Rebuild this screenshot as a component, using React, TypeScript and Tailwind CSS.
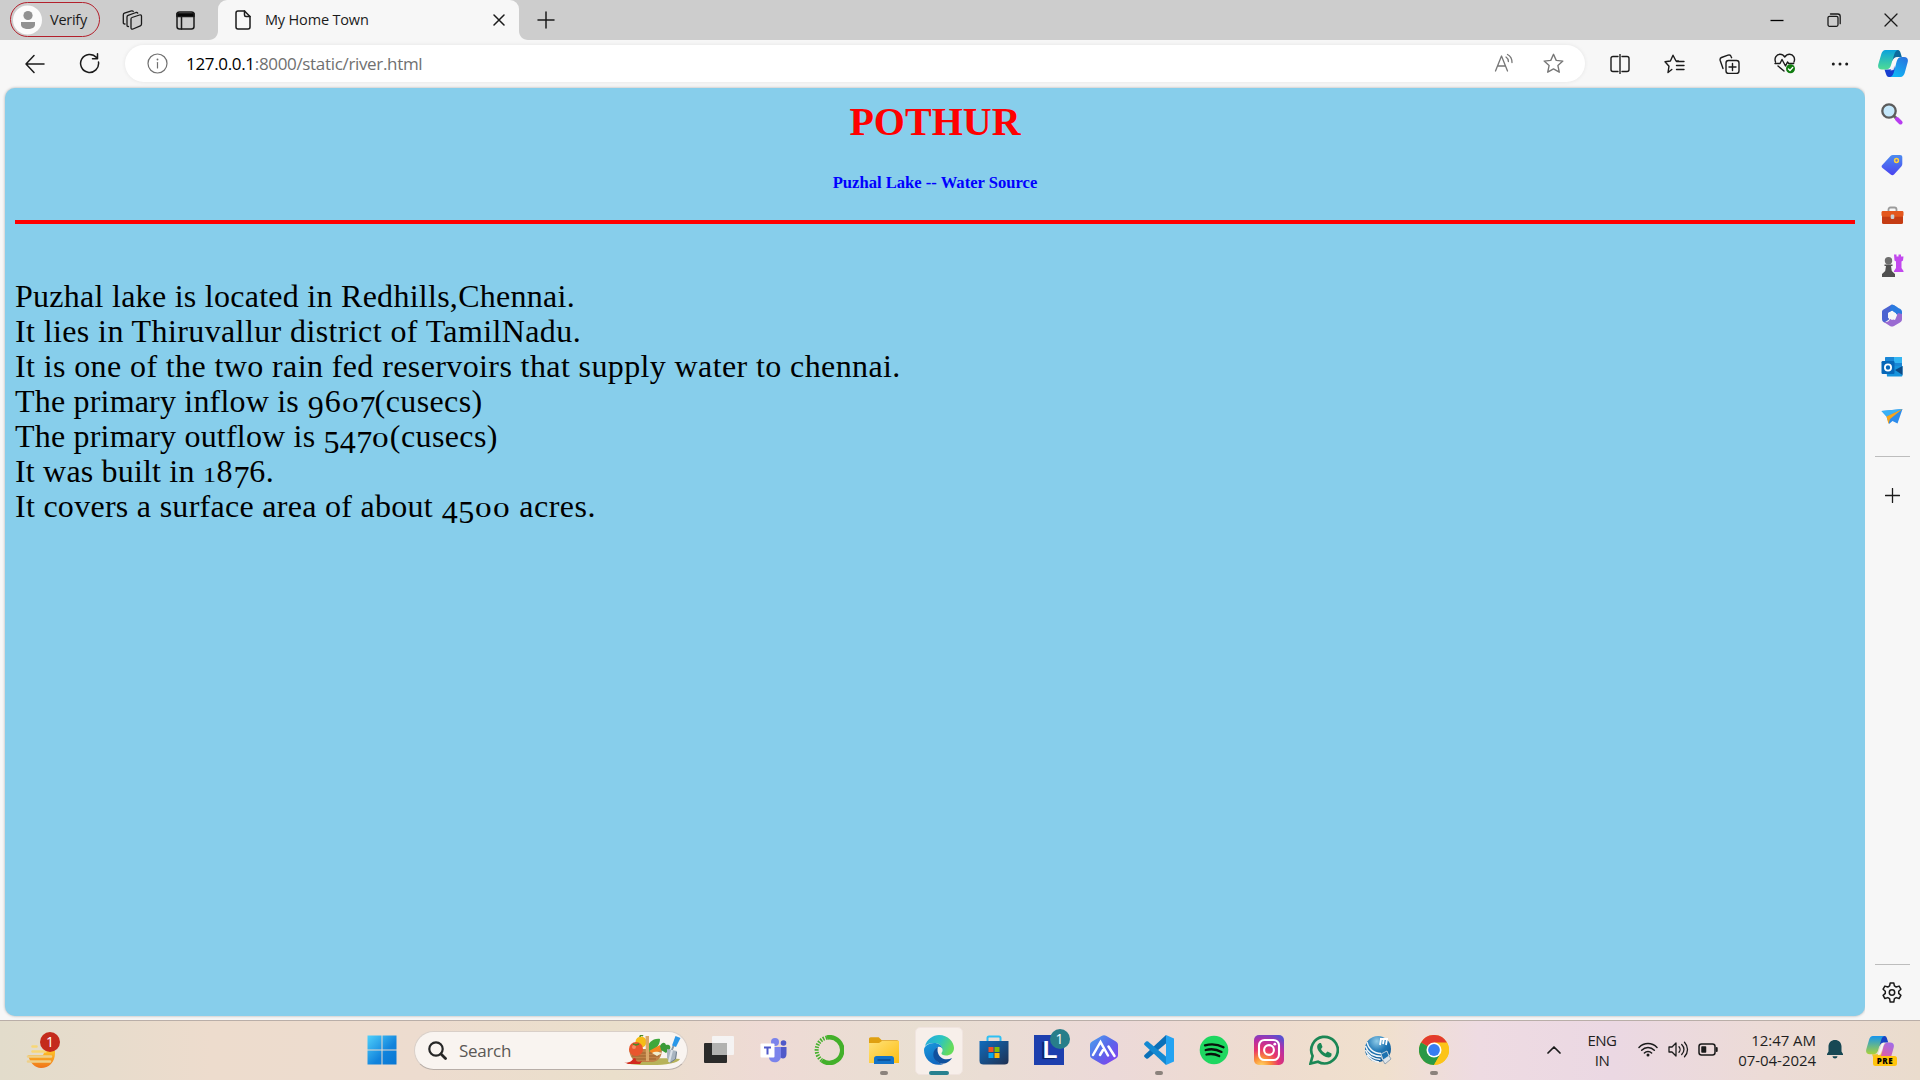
import type { ReactNode } from "react";

const UI = "font-['Open_Sans','Noto_Sans',sans-serif]";

function Ico({ w = 20, h, box, sw = 1.3, color = "#1b1b1b", children }: { w?: number; h?: number; box?: string; sw?: number; color?: string; children: ReactNode }) {
  return (
    <svg className="block shrink-0" width={w} height={h ?? w} viewBox={box ?? `0 0 ${w} ${h ?? w}`} fill="none" stroke={color} strokeWidth={sw} strokeLinecap="round" strokeLinejoin="round">
      {children}
    </svg>
  );
}

const STAR = "M10 1.2 12.6 7l6.3.7-4.7 4.3 1.3 6.3L10 15.2 4.500 18.3 5.800 12 1.100 7.700 7.400 7Z";

function CopilotMark({ size, id, colors }: { size: number; id: string; colors: string[] }) {
  return (
    <svg className="block shrink-0" width={size} height={(size * 27) / 30} viewBox="0 0 30 27">
      <defs>
        <linearGradient id={`${id}a`} x1="0" y1="0" x2="0" y2="1">
          <stop offset="0" stopColor={colors[0]} />
          <stop offset="1" stopColor={colors[1]} />
        </linearGradient>
        <linearGradient id={`${id}b`} x1="1" y1="0" x2="0.4" y2="1">
          <stop offset="0" stopColor={colors[2]} />
          <stop offset="1" stopColor={colors[3]} />
        </linearGradient>
      </defs>
      <path d="M12 0h8c1.400 0 2.100 1.400 2.600 3l1.200 4h-4c-3 0-4.500 1.500-5.300 4Z" fill={colors[4]} />
      <path d="M18 27h-7c-2 0-2.500-1.600-3-3l-1.500-4.500H11c3 0 4.500-1.500 5.300-4Z" fill={colors[5]} />
      <path d="M7.500 0H20c-2 .5-3 2-3.700 4.200l-3.500 11.500c-.9 2.600-2.300 3.800-5 3.800H4c-3.500 0-4.500-2.500-3.600-5.500L3.300 4C4 1.700 5.300 0 7.500 0Z" fill={`url(#${id}a)`} />
      <path d="M22.500 27H12c2-.5 3-2 3.700-4.200l3-11.500c.9-2.800 2.300-4.300 5-4.300H26c3.500 0 4.500 2.500 3.600 5.500L26.700 23c-.7 2.300-2 4-4.200 4Z" fill={`url(#${id}b)`} />
      <path d="m17 8 2.500-1-4 13-3 .5Z" fill="#f7f7f7" fillOpacity=".9" />
    </svg>
  );
}

function TabStrip() {
  return (
    <div className="flex h-10 shrink-0 bg-[#cdcdcd]">
      <div className="flex w-[218px] items-center pl-[10px]">
        <div className="mb-px flex h-[35px] w-[90px] items-center rounded-full border-[1.5px] border-[#b3202c] pl-[1px]">
          <svg width="30" height="30" viewBox="0 0 30 30">
            <circle cx="15.500" cy="15" r="14.500" fill="#fbfbfb" />
            <circle cx="16" cy="10.500" r="4.600" fill="#919191" />
            <path d="M9 17h14v2.500c0 3-3 4.500-7 4.500s-7-1.500-7-4.500Z" fill="#919191" />
          </svg>
          <span className="ml-[8px] text-[14.500px] tracking-[-0.25px] text-[#1b1b1b]">Verify</span>
        </div>
        <div className="ml-[22px]">
          <Ico w={21} h={21}>
            <path d="M10 7.500 17.500 5c1.300-.4 2 .2 2 1.300V14c0 .9-.3 1.500-1.200 1.900L11 19c-1.300.5-2-.2-2-1.200V9c0-.8.3-1.300 1-1.500Z" />
            <path d="M6.500 16.500c-1 .2-1.500-.4-1.500-1.300V7c0-.9.300-1.400 1.100-1.700L14 2.500c.8-.2 1.400 0 1.700.6M3 14c-1 .1-1.700-.4-1.700-1.300V4.900c0-.8.3-1.400 1.100-1.700L9.500.900c.8-.2 1.400 0 1.700.5" />
          </Ico>
        </div>
        <div className="ml-[33px]">
          <Ico w={19} h={19} sw={1.500}>
            <rect x="1" y="1" width="17" height="17" rx="2.500" />
            <path d="M1 2.500h17v3H1Z" fill="#000" />
            <path d="M5.500 5.500V18" />
          </Ico>
        </div>
      </div>
      <div className="relative flex w-[301px] items-center rounded-t-[9px] bg-[#f7f7f7] pl-[17px]">
        <svg className="absolute bottom-0 -left-[9px]" width="9" height="9"><path d="M9 0v9H0C5 9 9 5 9 0Z" fill="#f7f7f7" /></svg>
        <svg className="absolute -right-[9px] bottom-0" width="9" height="9"><path d="M0 0v9h9C4 9 0 5 0 0Z" fill="#f7f7f7" /></svg>
        <Ico w={16} h={20} sw={1.500}>
          <path d="M3 1h6.500L15 6.500V17c0 1.300-.7 2-2 2H3c-1.300 0-2-.7-2-2V3c0-1.300.7-2 2-2Z" />
          <path d="M9.500 1v4c0 1 .5 1.500 1.500 1.500h4" />
        </Ico>
        <span className="ml-[14px] text-[14.500px] tracking-[-0.17px] text-[#1b1b1b]">My Home Town</span>
        <div className="mr-[14px] ml-auto"><Ico w={12} sw={1.500}><path d="m1 1 10 10M11 1 1 11" /></Ico></div>
      </div>
      <div className="flex w-[53px] items-center justify-center"><Ico w={18} sw={1.500}><path d="M9 1v16M1 9h16" /></Ico></div>
      <div className="mr-[1px] ml-auto flex h-[39px]">
        <div className="flex w-[57px] items-center justify-center"><Ico w={14}><path d="M.5 7.500h13" strokeLinecap="butt" stroke="#000" /></Ico></div>
        <div className="flex w-[57px] items-center justify-center">
          <Ico w={14}><rect x="1" y="3.300" width="10" height="10" rx="1.500" /><path d="M3.500 1h7.300c1.600 0 2.400.8 2.400 2.400v7.300" /></Ico>
        </div>
        <div className="flex w-[57px] items-center justify-center"><Ico w={14}><path d="m1 1 12 12M13 1 1 13" /></Ico></div>
      </div>
    </div>
  );
}

function Cell({ children }: { children: ReactNode }) {
  return <div className="flex w-[55px] justify-center">{children}</div>;
}

function Toolbar() {
  return (
    <div className="flex h-12 shrink-0 items-center bg-[#f7f7f7] pb-[1px]">
      <div className="flex w-[125px] items-center pl-[25px]">
        <Ico w={20} sw={1.500}><path d="M19 10H1M9 1.500 1 10l8 8.500" /></Ico>
        <div className="ml-[34px]">
          <Ico w={21} sw={1.500}><path d="M17.500 4.600A9 9 0 1 0 19.500 9M18.500.8v5h-5" /></Ico>
        </div>
      </div>
      <div className="flex h-[37px] w-[1460px] items-center rounded-full bg-white pl-[22px] shadow-[0_0_4px_rgba(0,0,0,0.08)]">
        <Ico w={21} color="#707070" sw={1.200}>
          <circle cx="10.500" cy="10.500" r="9.500" /><path d="M10.500 9.500v5.500" /><path d="M10.500 6.300v.3" strokeWidth="1.800" />
        </Ico>
        <span className="ml-[18px] text-[17px] tracking-[-0.33px] whitespace-nowrap text-[#707070]">
          <span className="text-black">127.0.0.1</span>:8000/static/river.html
        </span>
        <div className="mr-[21px] ml-auto flex items-center gap-[28px]">
          <Ico w={21} color="#767676"><path d="m1.500 18 6-15 6 15M3.500 13h8M12 4c1.600 1 2.400 2.700 2.400 4.600M13.500 1.500c3 1.500 4.500 4.500 4.500 8" /></Ico>
          <Ico w={21} box="0 0 20 20" color="#767676"><path d={STAR} /></Ico>
        </div>
      </div>
      <div className="flex items-center pl-[7px]">
        <Cell><Ico w={20} sw={1.400}><path d="M8 2.500H3c-1.300 0-2 .7-2 2v11c0 1.300.7 2 2 2h5M12 2.500h5c1.300 0 2 .7 2 2v11c0 1.300-.7 2-2 2h-5M10 .500v19" /></Ico></Cell>
        <Cell><Ico w={21} h={20} sw={1.400}><path d="M7.800 15.500 4 18.500l1-6.300-4-4.400L6.400 7 9 1.200 12 7h2.500M12.500 7.500H20M12.500 11.500H20M12.500 15.500H20" /></Ico></Cell>
        <Cell><Ico w={21} h={20} sw={1.400}><rect x="7" y="6.500" width="13" height="13" rx="2.500" /><path d="M13.500 9.500v7M10 13h7M4 14.500 1.200 6.500C.8 5 1.200 4 2.500 3.500L9 1.200c1.500-.5 2.700 0 3.200 1.500l.4 1" /></Ico></Cell>
        <Cell>
          <Ico w={22} h={21} sw={1.400}>
            <path d="M1.500 9C0 5 2.500 1.200 6 1.200c2.200 0 3.700 1.100 4.800 2.800 1.100-1.700 2.700-2.800 4.800-2.800 3.500 0 6 3.800 4.400 7.800M1 10.500h5L8 6.500l3.500 6.500 2-4 1.200 1.500h5M4 13l6 5" />
            <circle cx="16.500" cy="15.800" r="4.500" fill="#107c10" stroke="none" /><path d="m14.500 16 1.500 1.400 2.700-2.800" stroke="#fff" />
          </Ico>
        </Cell>
        <Cell><Ico w={18} h={4}><g fill="#1b1b1b" stroke="none"><circle cx="2.300" cy="2" r="1.500" /><circle cx="9" cy="2" r="1.500" /><circle cx="15.700" cy="2" r="1.500" /></g></Ico></Cell>
        <div className="flex w-[52px] justify-center"><CopilotMark size={30} id="top" colors={["#0aa2dc", "#4fdc94", "#2b6fdc", "#12b4f5", "#0b6a9d", "#173ed0"]} /></div>
      </div>
    </div>
  );
}

/* Text figures: 0 and 1 are x-height, 4 5 7 9 hang below the baseline, 6 and 8 rise. */
const FIGURES: Record<string, { box: string; glyph: string }> = {
  "0": { box: "w-[18.4px]", glyph: "text-[21.500px] scale-x-[1.550]" },
  "1": { box: "w-[12.9px]", glyph: "text-[21.500px] scale-x-[1.250]" },
  "4": { box: "w-[17px]", glyph: "translate-y-[6px]" },
  "5": { box: "w-[15.8px]", glyph: "translate-y-[6px]" },
  "6": { box: "w-[17px]", glyph: "" },
  "7": { box: "w-[15.1px]", glyph: "translate-y-[6px]" },
  "8": { box: "w-[17.9px]", glyph: "" },
  "9": { box: "w-[17px]", glyph: "translate-y-[6px]" },
};

function Figures({ value }: { value: string }) {
  return (
    <span className="tracking-normal">
      {value.split("").map((d, i) => (
        <span key={i} className={`inline-block text-center leading-[20px] ${FIGURES[d].box}`}>
          <span className={`inline-block leading-[20px] ${FIGURES[d].glyph}`}>{d}</span>
        </span>
      ))}
    </span>
  );
}

function Article() {
  return (
    <div className="mt-[54px] px-[10px] text-left font-['Liberation_Serif',serif] text-[32px] leading-[35px] whitespace-nowrap text-black">
      <p className="h-[35px] tracking-[0.27px]">Puzhal lake is located in Redhills,Chennai.</p>
      <p className="h-[35px] tracking-[0.39px]">It lies in Thiruvallur district of TamilNadu.</p>
      <p className="h-[35px] tracking-[0.39px]">It is one of the two rain fed reservoirs that supply water to chennai.</p>
      <p className="h-[35px] tracking-[0.19px]">The primary inflow is <Figures value="9607" /><span className="tracking-[0.4px]">(cusecs)</span></p>
      <p className="h-[35px] tracking-[0.2px]">The primary outflow is <Figures value="5470" /><span className="tracking-[0.4px]">(cusecs)</span></p>
      <p className="h-[35px] tracking-[0.18px]">It was built in <Figures value="1876" />.</p>
      <p className="h-[35px] tracking-[0.28px]">It covers a surface area of about <Figures value="4500" /><span className="tracking-[0.5px]"> acres.</span></p>
    </div>
  );
}

function Page() {
  return (
    <main className="h-[928px] w-[1860px] rounded-[10px] bg-[#87ceeb] shadow-[0_0_3px_rgba(0,0,0,0.3)]">
      <h1 className="pt-[11px] text-center font-['Liberation_Serif',serif] text-[40px] leading-[46px] font-bold text-[#ff0000]">POTHUR</h1>
      <h5 className="mt-[28px] text-center font-['Liberation_Serif',serif] text-[16.600px] leading-[19px] font-bold text-[#0000ff]">Puzhal Lake -- Water Source</h5>
      <div className="mx-[10px] mt-[28px] h-[4px] bg-[#ff0000]" />
      <div className="pt-[1px]"><Article /></div>
    </main>
  );
}

function SideItem({ children, tall }: { children: ReactNode; tall?: boolean }) {
  return <div className={`flex w-full items-center justify-center pr-[1px] ${tall ? "h-[51px]" : "h-[50px]"}`}>{children}</div>;
}

function Sidebar() {
  return (
    <aside className="flex w-[55px] flex-col items-center bg-[#f7f7f7] pt-[1px]">
      <SideItem>
        <svg width="22" height="22" viewBox="0 0 22 22"><path d="m13 13 2.500 2.500" stroke="#666" strokeWidth="3" /><path d="m16 16 3.500 3.500" stroke="#b73cf0" strokeWidth="4" strokeLinecap="round" /><circle cx="8" cy="8" r="6.700" fill="#c5e8fb" stroke="#5c5c5c" strokeWidth="2.300" /></svg>
      </SideItem>
      <SideItem tall>
        <svg width="22" height="22" viewBox="0 0 22 22">
          <defs><linearGradient id="tag" x1="0" y1="0" x2="0" y2="1"><stop stopColor="#4c8cf0" /><stop offset="1" stopColor="#4a43f0" /></linearGradient></defs>
          <path d="M12 1h7c1.500 0 2.300.8 2.300 2.300V10c0 1-.3 1.700-1 2.400l-7.300 8c-1 1-2.200 1-3.300 0L1.500 14c-1.200-1-1.200-2.200 0-3.300L9.500 2c.7-.7 1.500-1 2.500-1Z" fill="url(#tag)" /><circle cx="15.500" cy="6.500" r="1.900" fill="#6b6fd0" stroke="#ffd43b" strokeWidth="1.500" />
        </svg>
      </SideItem>
      <SideItem>
        <svg width="23" height="19" viewBox="0 0 23 19"><path d="M7.500 6V3.500c0-1.300.7-2 2-2h4c1.300 0 2 .7 2 2V6" fill="none" stroke="#9b9b9b" strokeWidth="1.800" /><rect x="1" y="9" width="21" height="9" rx="1.500" fill="#c53c13" /><path d="M2 5h19c1 0 1.500.5 1.500 1.500V9c0 1-1 1.700-2 1.700h-18c-1 0-2-.7-2-1.700V6.500C.5 5.500 1 5 2 5Z" fill="#e4571d" /><rect x="9.700" y="8.500" width="3.600" height="4.500" rx="1.200" fill="#c9d0d4" /></svg>
      </SideItem>
      <SideItem>
        <svg width="23" height="23" viewBox="0 0 23 23"><path d="M13 .5h2.500v2h2v-2H20v2h2.500l-.5 4-1.500 1V14l2 3v1H13v-1l2-3V7.500l-1.500-1Z" fill="#c248ee" /><circle cx="7.500" cy="6.700" r="3.700" fill="#6e6e6e" /><path d="M3.500 10.500h8V12H10l.8 5 3.200 3v3H1v-3l3.200-3L5 12H3.500Z" fill="#505050" /></svg>
      </SideItem>
      <SideItem tall>
        <svg width="22" height="23" viewBox="0 0 22 23">
          <path d="M10 1 2.500 5.500C1.300 6.200 1 7 1 8v7c0 2 1 3 2.500 3.500L8 15.500 7 9l8-5c0-2-3-4-5-3Z" fill="#4b63d1" />
          <path d="M10 1c2-1 3 0 9 3.800 1.500.9 2 1.700 2 3.200v5l-6-3-4-3.500L8.500 8 10 1Z" fill="#2b7be0" />
          <path d="M21 10v5c0 1.700-.5 2.700-2 3.500l-6 3.500c-1.500.8-2.700.8-4 0l-7-4.500c4 1.500 7-.5 7-3l5 1.500L17 9Z" fill="#9a6bd2" />
          <path d="m11 7 4 2.300v4.500L11 16l-4-2.200V9.300Z" fill="#f7f7f7" />
        </svg>
      </SideItem>
      <SideItem>
        <svg width="22" height="21" viewBox="0 0 22 21"><path d="M5 1h15c.6 0 1 .4 1 1v9H4V2c0-.6.400-1 1-1Z" fill="#1a86d6" /><path d="M13 1h8v6h-8Z" fill="#33b5f2" /><path d="M5 10h16.500v9c0 1-.5 1.500-1.500 1.500H6Z" fill="#1794dd" /><path d="M21.500 10v9L14 14Z" fill="#0c4a86" /><rect x=".5" y="5" width="13" height="13" rx="1.200" fill="#0767b8" /><circle cx="7" cy="11.500" r="3.100" fill="none" stroke="#fff" strokeWidth="1.800" /></svg>
      </SideItem>
      <SideItem>
        <svg width="22" height="17" viewBox="0 0 22 17"><path d="m.5 3 21-2-5 14.500-5-2.500-3.500 3-2.500-7.500Z" fill="#2d8ceb" /><path d="M.5 3l21-2-16 7.500Z" fill="#39b1f6" /><path d="m5.500 8.500 16-7.500L9 11l-1.500 5Z" fill="#f7a51c" /></svg>
      </SideItem>
      <div className="mt-[15px] h-px w-[35px] bg-[#bdbdbd]" />
      <div className="mt-[31px] mr-[1px]"><Ico w={15} sw={1.300}><path d="M7.500.500v14M.5 7.500h14" /></Ico></div>
      <div className="mt-auto h-px w-[35px] bg-[#bdbdbd]" />
      <div className="mt-[17px] mr-[1px] mb-[16px]">
        <Ico w={22} sw={1.500}>
          <path d="M9.200 1h3.600l.6 2.900 1.800 1.100 2.900-.9 1.800 3.100-2.200 2v2.200l2.200 2-1.800 3.100-2.900-.9-1.800 1.100-.6 3.300H9.200l-.6-3.300-1.800-1.100-2.900.9-1.800-3.100 2.200-2V9.200l-2.200-2 1.800-3.100 2.900.9 1.800-1.100Z" /><circle cx="11" cy="10.500" r="2.700" />
        </Ico>
      </div>
    </aside>
  );
}

function App30({ children, mark, active }: { children: ReactNode; mark?: boolean; active?: boolean }) {
  return (
    <div className="relative flex h-[60px] w-[55px] items-center justify-center">
      {active && <div className="absolute inset-x-[3.500px] top-[6px] bottom-[6px] rounded-[5px] border border-[#f0e4df] bg-[#f7efea]" />}
      <div className="relative mb-[1px]">{children}</div>
      {active && <div className="absolute bottom-[6px] h-[4px] w-[20px] rounded-full bg-[#27818f]" />}
      {mark && <div className="absolute bottom-[6px] h-[4px] w-[8px] rounded-full bg-[#8b827c]" />}
    </div>
  );
}

function S({ children, box = "0 0 30 30" }: { children: ReactNode; box?: string }) {
  return <svg className="block" width="30" height="30" viewBox={box}>{children}</svg>;
}

function Vegetables() {
  return (
    <svg className="block" width="58" height="31" viewBox="0 0 58 31">
      <path d="M4 28c10-4 38-6 53-4-2 4-14 6-28 6-12 0-20 0-25-2Z" fill="#b7b35a" />
      <path d="M6 14h33c0 8-4 13-10 13H17C10 27 7 22 6 14Z" fill="#c08247" />
      <path d="M8 18h29M9 21h27M12 24h21" stroke="#99602f" strokeWidth="1" />
      <circle cx="18" cy="7" r="5.500" fill="#f6bd16" />
      <path d="M17 2c0-2 2-2 3-1" stroke="#4d8b26" strokeWidth="1.500" fill="none" />
      <circle cx="13" cy="14" r="7" fill="#e9562d" /><circle cx="11" cy="12" r="2" fill="#f58a60" /><path d="m10 9 3 1 3-1" stroke="#4d8b26" strokeWidth="1.500" fill="none" />
      <path d="M24 16c0-8 6-13 13-12 0 6-4 10-10 13Z" fill="#3fa83c" />
      <path d="m26 16 11-6 3 4-9 5Z" fill="#f5871f" />
      <path d="M37 11c2-4 5-4 6-1 4-1 5 2 4 4l-4 4-5-3Z" fill="#3a9a38" />
      <path d="M29 18c3-2 6-1 10 0l-5 3Z" fill="#f1efcf" />
      <path d="M22.500 1h3.500v25h-3Z" fill="#d9a86a" />
      <path d="m52.500 1 5 2-4.500 9-4-1.500Z" fill="#2a97e8" />
      <path d="m50.500 11-2 5" stroke="#8997a4" strokeWidth="2" />
      <path d="m44 14 10 2-1 8-6 4-3-5Z" fill="#a9b5c0" /><path d="m49 15-3 12" stroke="#dbe2e8" strokeWidth="2" /><path d="m53.500 17-1 7-5 3.500" stroke="#6e7d8b" strokeWidth="1" fill="none" />
      <path d="M1 27c4 2 8-1 9-3s3-1 3 1 4 2 6 1l-2 3H5Z" fill="#d22a1e" />
    </svg>
  );
}

function Taskbar() {
  return (
    <footer className="flex h-[60px] shrink-0 items-center border-t border-[#b9aea8] bg-[linear-gradient(90deg,#e2dccb_0%,#eddccd_11%,#eddccf_22%,#eadfcb_32%,#eedad5_40%,#e9dfd2_48%,#ecd9d8_58%,#eedccf_66%,#f0e0cd_72%,#eedbe2_77%,#ebd8e3_84%,#ecdbd6_92%,#eadccd_100%)]">
      <div className="w-[354px] pl-[26px]">
        <div className="relative h-[36px] w-[36px]">
          <svg width="34" height="38" viewBox="0 0 34 38">
            <defs><linearGradient id="sun" x1="0" y1="0" x2="0" y2="1"><stop stopColor="#ffc328" /><stop offset="1" stopColor="#ef7319" /></linearGradient></defs>
            <path d="M2 22h15l2-4h10v2c0 9-6 15-14 15-6 0-11-5-13-13Z" fill="url(#sun)" />
            <path d="M6.500 13.500h4M6.500 18.500h13" stroke="#f7d777" strokeWidth="2.600" strokeLinecap="round" />
            <path d="M2 23.500h15M2 28.500h22M18 23.500h7" stroke="#eed08a" strokeWidth="2.600" strokeLinecap="round" />
          </svg>
          <div className="absolute top-[-1px] left-[14px] flex h-5 w-5 items-center justify-center rounded-full bg-[#c42b1c] text-[14px] text-white">1</div>
        </div>
      </div>
      <App30>
        <S><defs><linearGradient id="win" x1="0" y1="0" x2="1" y2="1"><stop stopColor="#4fd0fb" /><stop offset=".6" stopColor="#1183dc" /><stop offset="1" stopColor="#0876d3" /></linearGradient></defs><path d="M.5.500h14v14h-14ZM15.500.500h14v14h-14ZM.5 15.500h14v14h-14ZM15.500 15.500h14v14h-14Z" fill="url(#win)" /></S>
      </App30>
      <div className="ml-[5px] flex h-[39px] w-[274px] items-center rounded-full border border-[#d9cfc8] border-b-[#b8aea8] bg-[#f9f4f0] pl-[13px]">
        <Ico w={19} sw={2.200} color="#262626"><circle cx="8" cy="8" r="6.700" /><path d="m13 13 4.500 4.500" strokeWidth="2.800" /></Ico>
        <span className="ml-[12px] text-[17px] tracking-[-0.3px] text-[#5b5855]">Search</span>
        <div className="mr-[6px] ml-auto"><Vegetables /></div>
      </div>
      <div className="ml-[3px] flex">
        <App30><S><rect x="0" y="8" width="23" height="20" rx="1" fill="#2b2b2a" /><rect x="8" y="1" width="22" height="19" rx="1" fill="#f5f5f5" fillOpacity=".92" /><rect x="8" y="8" width="15" height="12" fill="#b2b2b0" /></S></App30>
        <App30>
          <S><circle cx="16" cy="7" r="4" fill="#7b83eb" /><circle cx="24.500" cy="8" r="2.800" fill="#5059c9" /><path d="M19 12h8.500v7c0 6-7 6-7 0Z" fill="#5059c9" /><path d="M9 12h13v9c0 8-11 8-12 2Z" fill="#7b83eb" /><rect x="1.500" y="8.500" width="14" height="14" rx="1" fill="#fff" /><path d="M5 12.500h7M8.500 12.500v7" stroke="#5059c9" strokeWidth="2" /></S>
        </App30>
        <App30>
          <S><path d="M13 2.500A12.800 12.800 0 1 1 8 25.500" fill="none" stroke="#43b02a" strokeWidth="4.600" /><path d="M13 2.500A12.800 12.800 0 0 0 8 25.500" fill="none" stroke="#43b02a" strokeWidth="4" strokeDasharray="1.500 1.300" /></S>
        </App30>
        <App30 mark>
          <S><defs><linearGradient id="fold" x1="0" y1="0" x2="1" y2="1"><stop stopColor="#ffe27a" /><stop offset="1" stopColor="#fdbd10" /></linearGradient></defs><path d="M0 4c0-1 .7-1.700 1.700-1.700h8l3 3H28c1 0 2 .7 2 2V15H0Z" fill="#dfa010" /><path d="M0 8h10l3-2h17v22H0Z" fill="url(#fold)" /><path d="M5 29v-5.500C5 22 6 21 7.500 21h15c1.500 0 2.500 1 2.500 2.500V29Z" fill="#1473c8" /><path d="M9 25h12" stroke="#0a4c91" strokeWidth="1.500" strokeLinecap="round" /></S>
        </App30>
        <App30 active>
          <S>
            <defs>
              <linearGradient id="ed1" x1="0" y1="0" x2="1" y2=".4"><stop stopColor="#25a5df" /><stop offset=".55" stopColor="#2bc4c2" /><stop offset="1" stopColor="#65dc5b" /></linearGradient>
              <linearGradient id="ed2" x1="0" y1="0" x2=".5" y2="1"><stop stopColor="#1a9bdd" /><stop offset="1" stopColor="#1167c0" /></linearGradient>
            </defs>
            <path d="M1 11C3 4 9 0 15 0c9 0 15 7 15 13 0 5-4 7.500-8 7.500-3 0-5-1-4.500-2.500.7-1 1.300-2 1-3.500C18 10 14 8 10 8c-4 0-7 1-9 3Z" fill="url(#ed1)" />
            <path d="M0 15C0 11 5 8 10 8c4.500 0 8 2.500 8.500 6-1-2-3-2.700-4.500-2-3 1.500-5 6-3 11 1.500 3.500 5 6 8.500 6-10 3.500-19.500-4-19.500-14Z" fill="url(#ed2)" />
            <path d="M14 12c-5 2-7 10-1 14.500 5 4.500 12 1.500 15-3.500-4 2.200-9 1.700-12-1.500-2.500-3-3-6.500-2-9.500Z" fill="#10519e" />
          </S>
        </App30>
        <App30><S><defs><linearGradient id="sto" x1="0" y1="0" x2="1" y2="1"><stop stopColor="#0f6cbd" /><stop offset="1" stopColor="#203152" /></linearGradient></defs><path d="M8.500 7V3c0-1 .5-1.500 1.500-1.500h10c1 0 1.500.5 1.500 1.500v4" fill="none" stroke="#2fc0f3" strokeWidth="2" /><path d="M.5 6h29v19.500c0 3-1.500 4-4 4h-21c-2.500 0-4-1-4-4Z" fill="url(#sto)" /><path d="M9.500 12h5v5h-5Z" fill="#f35325" /><path d="M15.500 12h5v5h-5Z" fill="#81bc06" /><path d="M9.500 18h5v5h-5Z" fill="#05a6f0" /><path d="M15.500 18h5v5h-5Z" fill="#ffba08" /></S></App30>
        <App30>
          <div className="relative flex h-[30px] w-[30px] items-center justify-center bg-[#1d3fae] font-['Liberation_Sans',sans-serif] text-[24px] leading-none font-bold text-white [text-shadow:-2px_1px_1px_#0c1f5c]">
            <span className="ml-[3px]">L</span>
            <span className={`absolute -top-[6px] -right-[6px] flex h-5 w-5 items-center justify-center rounded-full bg-[#277e8a] text-[14px] font-normal [text-shadow:none] ${UI}`}>1</span>
          </div>
        </App30>
        <App30><S><defs><linearGradient id="hex" x1="0" y1="0" x2="1" y2="1"><stop stopColor="#4aa3ee" /><stop offset=".5" stopColor="#5a66ea" /><stop offset="1" stopColor="#8a3df0" /></linearGradient></defs><path d="M12.500 1c1.700-1 3.300-1 5 0l9 5.200c1.500.8 2.500 2 2.500 3.800v10c0 1.800-1 3-2.500 3.800l-9 5.200c-1.700 1-3.300 1-5 0l-9-5.200C2 23 1 21.800 1 20V10c0-1.800 1-3 2.500-3.800Z" fill="url(#hex)" /><path d="m4 20 7.500-13L19 20.500M11 20l3-5M19.500 11.500 25.500 21" stroke="#fff" strokeWidth="2.500" fill="none" strokeLinecap="round" /></S></App30>
        <App30 mark><S><path d="m22 0 8 3.500v23L22 30Z" fill="#24a3f2" /><path d="M22 0v8.500L4 23.500c-.7.500-1.300.4-1.800 0L.5 22c-.6-.7-.6-1.300 0-2Z" fill="#0b70b8" /><path d="M22 30v-8.500L4 6.500c-.7-.5-1.300-.4-1.800 0L.5 8c-.6.700-.6 1.300 0 2Z" fill="#1389d2" /></S></App30>
        <App30><S><circle cx="15" cy="15" r="14.300" fill="#1ed760" /><path d="M6 10.300c6.500-1.700 13-1 18.500 2M6.700 15c5.500-1.400 11-.8 15.800 1.900M7.500 19.500c4.500-1 9-.5 12.700 1.600" stroke="#08120b" strokeWidth="2.300" fill="none" strokeLinecap="round" /></S></App30>
        <App30><S><defs><radialGradient id="ig" cx=".25" cy="1.050" r="1.150"><stop stopColor="#ffdc6b" /><stop offset=".25" stopColor="#fb9137" /><stop offset=".5" stopColor="#e8346b" /><stop offset=".78" stopColor="#b42ea8" /><stop offset="1" stopColor="#5b4fd0" /></radialGradient></defs><rect width="30" height="30" rx="5" fill="url(#ig)" /><rect x="5" y="5" width="20" height="20" rx="5.500" fill="none" stroke="#fff" strokeWidth="2.100" /><circle cx="15" cy="15" r="4.900" fill="none" stroke="#fff" strokeWidth="2.100" /><circle cx="20.800" cy="9.200" r="1.400" fill="#fff" /></S></App30>
        <App30><S><path d="M1.500 28.500 3.600 21A13.300 13.300 0 1 1 9 26.700Z" fill="none" stroke="#1b8755" strokeWidth="2.700" /><path d="M10.500 8c-3 1.500-3 5-.5 8.500s6 6 9.500 6c2 0 3.500-1.500 3-4l-4-2-2 2c-2-1-4-3-4.500-4.500l1.500-2-1.500-4Z" fill="#1b8755" /></S></App30>
        <App30><S><defs><radialGradient id="ball" cx=".45" cy=".2" r=".8"><stop stopColor="#8fcbe8" /><stop offset=".5" stopColor="#1f76b4" /><stop offset="1" stopColor="#0d5691" /></radialGradient></defs><circle cx="14" cy="14" r="13" fill="url(#ball)" /><path d="M1.500 11c2 6 7 10.500 16 10.500M1.500 15c2 5 7 9 15 9.500M3 20c3 4 7 6.500 12 7M3 7c1 6 6 11 14 11.500" stroke="#f0f5f8" strokeWidth="1.500" fill="none" /><path d="m17 4-1 6M20 3l-1 6M23 4l-1 6M16 4h8" stroke="#fff" strokeWidth="1.800" /><path d="m17 22 7-3 3 5-6 5Z" fill="#dfe5e9" stroke="#92a4b2" /><path d="m17 19 6-3 2 5-6 4Z" fill="#1c72b0" stroke="#dfe5e9" strokeWidth=".8" /></S></App30>
        <App30 mark>
          <S><circle cx="15" cy="15" r="15" fill="#fbc116" /><path d="M15 15 2 7.500A15 15 0 0 1 28 7.500Z" fill="#e33b2e" /><path d="M15 15 2 7.500A15 15 0 0 0 15 30l6.500-11.200Z" fill="#2a9945" /><path d="M15 15V7.500h13a15 15 0 0 1-13 22.500l6.500-11.200Z" fill="#fcc419" /><circle cx="15" cy="15" r="7.500" fill="#fff" /><circle cx="15" cy="15" r="5.900" fill="#377df2" /></S>
        </App30>
      </div>
      <div className="ml-auto flex items-center pb-[2px] text-[#1f1f1f]">
        <Ico w={14} h={8} sw={1.700}><path d="m1 7 6-6 6 6" /></Ico>
        <div className="ml-[24px] w-[34px] text-center text-[15px] leading-[20px] tracking-[-0.5px]">ENG<br />IN</div>
        <div className="ml-[19px]">
          <Ico w={20} h={15} sw={1.500}><path d="M1 5.500c5-5.300 13-5.300 18 0M3.700 8.300c3.500-3.700 9.100-3.700 12.600 0M6.400 11c2-2 5.200-2 7.200 0" /><circle cx="10" cy="13" r="1.500" fill="#1b1b1b" stroke="none" /></Ico>
        </div>
        <div className="ml-[10px]"><Ico w={21} h={17}><path d="M1 6h3l4-4v13l-4-4H1ZM11 5.800c1.400 1.500 1.400 4 0 5.500M13.700 3.500c3 3 3 7 0 10M16.500 1.200c4 4.300 4 10.300 0 14.600" /></Ico></div>
        <div className="ml-[9px]"><Ico w={20} h={13} sw={1.500}><rect x="1" y="1" width="16" height="11" rx="2.500" /><path d="M4 4h3.500v5H4Z" fill="#1b1b1b" /><path d="M18.700 5v3" strokeWidth="2" /></Ico></div>
        <div className="ml-[18px] w-[80px] text-right text-[15px] leading-[20px] tracking-[-0.05px] whitespace-nowrap">12:47 AM<br />07-04-2024</div>
        <div className="ml-[11px]"><svg width="16" height="19" viewBox="0 0 16 19"><path d="M8 0c3.700 0 6.500 2.700 6.500 6.500v5L16 14v1H0v-1l1.500-2.500v-5C1.500 2.700 4.300 0 8 0ZM5.500 16.300h5c-.3 1.500-1.200 2.200-2.500 2.200s-2.200-.7-2.500-2.200Z" fill="#174854" /></svg></div>
        <div className="relative mt-[2px] mr-[24px] ml-[23px] h-[29px] w-[30px]">
          <CopilotMark size={28} id="tray" colors={["#1595ee", "#a8d23b", "#9b6df0", "#ec5b95", "#1743c4", "#f2c425"]} />
          <span className="absolute -right-[1px] -bottom-[1px] flex h-[10px] w-[24px] items-center justify-center rounded-[2.500px] bg-[#ffc40d] text-[8px] leading-none font-extrabold tracking-[0.6px] text-black">PRE</span>
        </div>
      </div>
    </footer>
  );
}

export default function App() {
  return (
    <div className={`flex h-[1080px] w-[1920px] flex-col overflow-hidden bg-[#f7f7f7] ${UI}`}>
      <TabStrip />
      <Toolbar />
      <div className="flex h-[932px] shrink-0 pl-[5px]">
        <Page />
        <Sidebar />
      </div>
      <Taskbar />
    </div>
  );
}
